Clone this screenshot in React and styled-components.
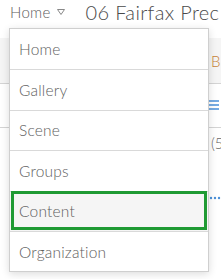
import React from 'react';
import styled, { createGlobalStyle } from 'styled-components';

const GlobalStyle = createGlobalStyle`
  html, body {
    margin: 0;
    padding: 0;
    background: #fff;
    font-family: Lato, "Open Sans", sans-serif;
    overflow: hidden;
  }
`;

const Page = styled.div`
  position: relative;
  width: 221px;
  height: 279px;
  overflow: hidden;
  background: #fff;
`;

const Header = styled.div`
  display: flex;
  align-items: center;
  height: 24px;
  padding: 0 0 0 10px;
  white-space: nowrap;
`;

const HomeLink = styled.span`
  font-size: 15px;
  font-weight: 300;
  color: #5c5c5c;
  letter-spacing: 0.3px;
`;

const Caret = styled.span`
  margin-left: 6px;
  display: flex;
  align-items: center;
`;

const Title = styled.span`
  margin-left: 21px;
  font-size: 20px;
  font-weight: 300;
  color: #4a4a4a;
  letter-spacing: 0.35px;
`;

const Band = styled.div`
  margin-top: 14px;
  height: 45px;
  background: #f5f5f5;
  border-bottom: 1px solid #d4d4d4;
  display: flex;
  justify-content: flex-end;
  align-items: center;
`;

const SideText = styled.span`
  width: 10px;
  font-size: 15px;
  font-weight: 300;
  color: ${p => p.color || '#6a6a6a'};
  overflow: hidden;
  white-space: nowrap;
`;

const SideRow = styled.div`
  display: flex;
  justify-content: flex-end;
  height: ${p => p.h}px;
  align-items: center;
  border-bottom: ${p => (p.line ? '1px solid #d4d4d4' : 'none')};
`;

const FooterRow = styled.div`
  display: flex;
  align-items: flex-end;
  height: 32px;
  padding-left: 25px;
`;

const Stub = styled.span`
  width: 11px;
  height: 2px;
  background: #d0d0d0;
`;

const Menu = styled.ul`
  position: absolute;
  left: 9px;
  top: 28px;
  width: 198px;
  margin: 0;
  padding: 0;
  list-style: none;
  background: #fff;
  border: 1px solid #cfcfcf;
  box-shadow: 0 2px 8px rgba(0, 0, 0, 0.14);
`;

const Item = styled.li`
  position: relative;
  box-sizing: border-box;
  height: 40.4px;
  display: flex;
  align-items: center;
  padding-left: 9px;
  font-size: 15.5px;
  font-weight: 300;
  color: #5e5e5e;
  letter-spacing: 0.2px;
  border-top: ${p => (p.first ? 'none' : '1px solid #d9d9d9')};
  background: ${p => (p.active ? '#f5f5f5' : '#fff')};

  &::after {
    content: '';
    display: ${p => (p.active ? 'block' : 'none')};
    position: absolute;
    left: 1px;
    right: 1px;
    top: -1px;
    bottom: 1px;
    border: 3px solid #1f9a33;
  }
`;

const items = ['Home', 'Gallery', 'Scene', 'Groups', 'Content', 'Organization'];

export default function App() {
  return (
    <Page>
      <GlobalStyle />
      <Header>
        <HomeLink>Home</HomeLink>
        <Caret>
          <svg width="8" height="6" viewBox="0 0 8 6">
            <path d="M0.5 0.5 L7.5 0.5 L4 5.5 Z" fill="none" stroke="#888" strokeWidth="1" />
          </svg>
        </Caret>
        <Title>06 Fairfax Prec</Title>
      </Header>
      <Band>
        <SideText color="#c8843a">B</SideText>
      </Band>
      <SideRow h={43} line>
        <svg width="10" height="12" viewBox="0 0 10 12" style={{ marginRight: 2 }}>
          <path d="M0 1h10M0 5h10M0 9h10" stroke="#4a90d9" strokeWidth="1.3" />
        </svg>
      </SideRow>
      <SideRow h={30}>
        <SideText>(5</SideText>
      </SideRow>
      <SideRow h={80}>
        <svg width="12" height="4" viewBox="0 0 12 4">
          <circle cx="2" cy="2" r="1.2" fill="#4a90d9" />
          <circle cx="6" cy="2" r="1.2" fill="#4a90d9" />
          <circle cx="10" cy="2" r="1.2" fill="#4a90d9" />
        </svg>
      </SideRow>
      <FooterRow>
        <Stub />
      </FooterRow>
      <Menu>
        {items.map((t, i) => (
          <Item key={t} first={i === 0} active={t === 'Content'}>
            {t}
          </Item>
        ))}
      </Menu>
    </Page>
  );
}
